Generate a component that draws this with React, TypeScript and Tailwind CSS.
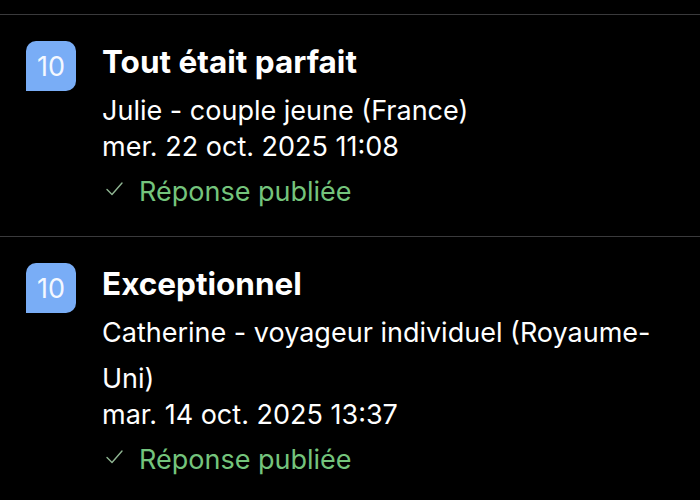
import React from "react";

type Review = {
	score: number;
	title: string;
	author: string;
	date: string;
};

const reviews: Review[] = [
	{
		score: 10,
		title: "Tout était parfait",
		author: "Julie - couple jeune (France)",
		date: "mer. 22 oct. 2025 11:08",
	},
	{
		score: 10,
		title: "Exceptionnel",
		author: "Catherine - voyageur individuel (Royaume-Uni)",
		date: "mar. 14 oct. 2025 13:37",
	},
];

function ScoreBadge({ score }: { score: number }) {
	return (
		<div className="w-[50px] h-[50px] shrink-0 bg-[#79adf6] rounded-t-[10px] rounded-br-[10px] flex items-center justify-center">
			<span className="text-[27px] leading-none text-[#f4f8ff] font-normal">
				{score}
			</span>
		</div>
	);
}

function ReviewRow({ review }: { review: Review }) {
	return (
		<div className="border-t border-[#3a3a3c] flex items-start pt-[26px] pb-[28px] pl-[26px] pr-[40px]">
			<ScoreBadge score={review.score} />
			<div className="flex-1 ml-[26px] flex flex-col">
				<div className="text-[31.5px] leading-[41px] font-bold text-white">
					{review.title}
				</div>
				<div className="mt-[6px] text-[27px] leading-[46px] text-white">
					{review.author}
				</div>
				<div className="text-[27px] leading-[26px] text-white">
					{review.date}
				</div>
				<div className="mt-[16px] flex items-center text-[27px] leading-[32px] text-[#74c47c]">
					<svg
						width="17"
						height="14"
						viewBox="0 0 17 14"
						className="ml-[4px] mr-[16px] -mt-[6px]"
						fill="none"
					>
						<polyline
							points="1,7.5 6,12.5 16,1"
							stroke="#8fb592"
							strokeWidth="1.4"
							strokeLinecap="round"
							strokeLinejoin="round"
						/>
					</svg>
					<span>Réponse publiée</span>
				</div>
			</div>
		</div>
	);
}

export default function App() {
	return (
		<div
			className="w-[700px] h-[500px] bg-black overflow-hidden pt-[14px]"
			style={{ fontFamily: "Inter, 'Noto Sans', sans-serif" }}
		>
			{reviews.map((r, i) => (
				<ReviewRow key={i} review={r} />
			))}
		</div>
	);
}
